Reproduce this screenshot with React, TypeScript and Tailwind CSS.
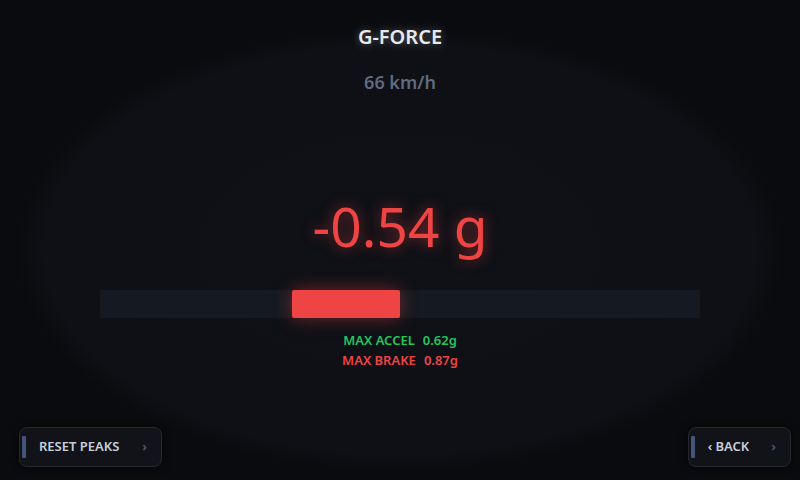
import React from "react";

const G_RANGE = 1.5;

type Peak = { label: string; value: number; tone: "accel" | "brake" };

const peaks: Peak[] = [
  { label: "MAX ACCEL", value: 0.62, tone: "accel" },
  { label: "MAX BRAKE", value: 0.87, tone: "brake" },
];

function PanelButton({
  label,
  chevronClass,
}: {
  label: string;
  chevronClass: string;
}) {
  return (
    <button className="flex h-10 items-center rounded-lg border border-[#232832] bg-[#111319] pl-[2px] pr-[14px] shadow-[0_0_8px_rgba(0,0,0,0.6)]">
      <span className="h-[22px] w-[4px] rounded-[1px] bg-[#44557a]" />
      <span className="ml-[13px] text-[13px] font-semibold text-[#c8d0dc]">
        {label}
      </span>
      <span className={`text-[13px] font-bold text-[#44557a] ${chevronClass}`}>
        ›
      </span>
    </button>
  );
}

export default function App() {
  const g = -0.54;
  const half = 300;
  const fillW = (Math.abs(g) / G_RANGE) * half;

  return (
    <div
      className="flex h-[480px] w-[800px] flex-col items-center overflow-hidden bg-[#0a0b0e] bg-[radial-gradient(ellipse_385px_222px_at_50%_52%,#0f1117_0%,#0e1015_92%,#0a0b0e_100%)]"
      style={{ fontFamily: '"Noto Sans", "Open Sans", sans-serif' }}
    >
      <h1 className="mt-[23px] text-[20px] leading-[28px] font-semibold text-[#e6e9ef] [text-shadow:0_0_10px_rgba(255,255,255,0.35)]">
        G-FORCE
      </h1>
      <div className="mt-[19px] text-[18px] leading-[24px] font-semibold text-[#5f6b80]">
        66 km/h
      </div>

      <div className="mt-[102px] text-[55px] leading-[60px] text-[#ef4444] [text-shadow:0_0_14px_rgba(239,68,68,0.55)]">
        -0.54 g
      </div>

      <div className="mt-[34px] flex h-[28px] w-[600px] bg-[#151921]">
        <div className="flex w-[300px] justify-end">
          {g < 0 && (
            <div
              className="h-full rounded-[2px] bg-[#ef4444] shadow-[0_0_18px_rgba(239,68,68,0.45)]"
              style={{ width: fillW }}
            />
          )}
        </div>
        <div className="flex w-[300px] justify-start">
          {g > 0 && (
            <div
              className="h-full rounded-[2px] bg-[#22c55e] shadow-[0_0_18px_rgba(34,197,94,0.45)]"
              style={{ width: fillW }}
            />
          )}
        </div>
      </div>

      <div className="mt-[12px] flex flex-col items-center text-[13px] leading-[20px] font-semibold">
        {peaks.map((p) => (
          <div
            key={p.label}
            className={p.tone === "accel" ? "text-[#22c55e]" : "text-[#ef4444]"}
          >
            {p.label}
            <span className="ml-[8px]">{p.value.toFixed(2)}g</span>
          </div>
        ))}
      </div>

      <div className="mt-auto mb-[13px] flex w-full items-end justify-between pl-[19px] pr-[9px]">
        <PanelButton label="RESET PEAKS" chevronClass="ml-[23px]" />
        <PanelButton label="‹ BACK" chevronClass="ml-[22px]" />
      </div>
    </div>
  );
}
